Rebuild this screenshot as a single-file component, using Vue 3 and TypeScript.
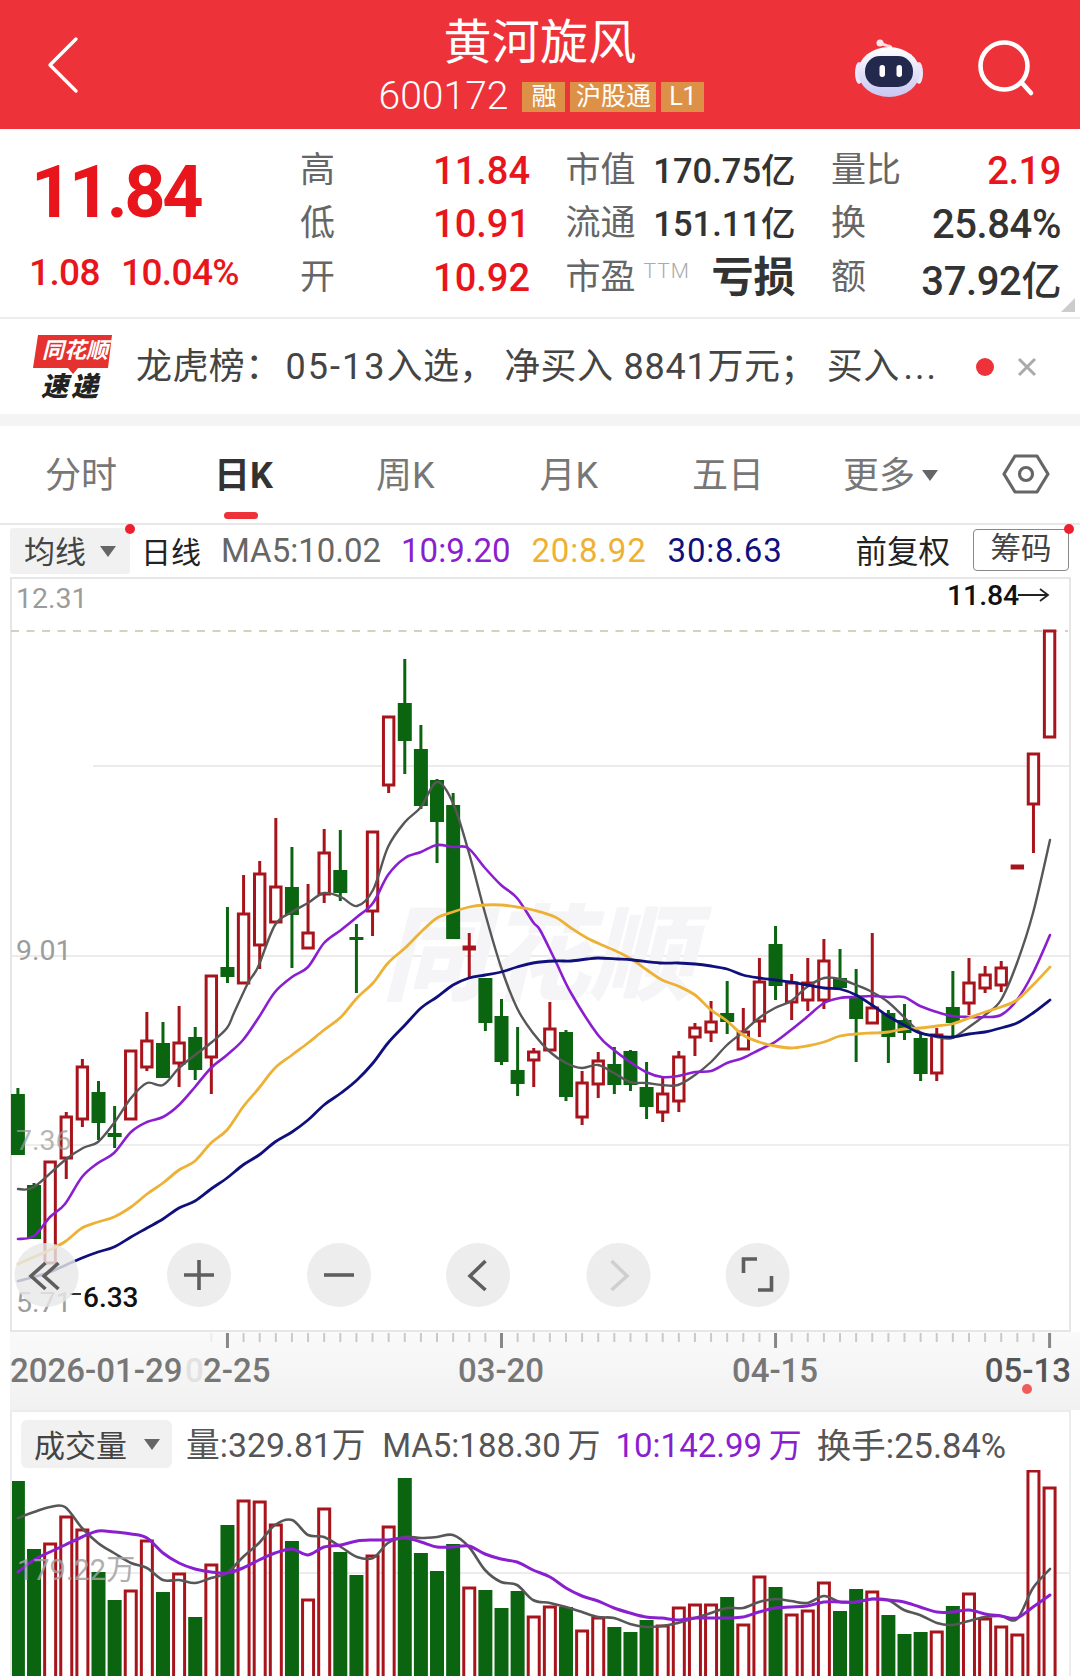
<script setup lang="ts">
type C = [number, number, number, number, number]
// kind: 0 red hollow, 1 green solid; wick top, body top, body bottom, wick bottom
const raw: C[] = [
[1,1088,1094,1155,1155],[1,1183,1185,1239,1239],[0,1162,1162,1263,1263],[0,1112,1117,1158,1179],[0,1059,1067,1119,1127],
[1,1081,1092,1123,1140],[1,1106,1133,1137,1148],[0,1051,1051,1119,1119],[0,1012,1041,1067,1071],[1,1022,1043,1078,1078],
[0,1006,1043,1063,1087],[1,1027,1037,1070,1080],[0,976,976,1057,1094],[1,907,967,977,983],[0,875,914,983,983],
[0,861,874,945,969],[0,818,887,922,922],[1,847,887,915,968],[0,884,933,948,948],[0,829,853,894,903],
[1,830,870,893,901],[1,924,937,940,993],[0,832,832,911,936],[0,717,717,785,793],[1,659,703,741,774],
[1,725,749,806,809],[1,779,780,822,863],[1,793,805,939,939],[0,933,947,949,977],[1,978,978,1023,1031],
[1,999,1016,1062,1065],[1,1027,1070,1084,1096],[0,1048,1052,1060,1087],[0,1002,1029,1050,1050],[1,1030,1032,1097,1101],
[0,1071,1083,1117,1125],[0,1052,1061,1084,1098],[1,1047,1064,1085,1094],[1,1050,1051,1085,1091],[1,1062,1087,1107,1119],
[0,1078,1094,1112,1122],[0,1051,1057,1101,1112],[0,1023,1028,1037,1056],[0,1001,1022,1032,1042],[1,981,1013,1022,1034],
[0,1008,1032,1049,1049],[0,958,982,1021,1037],[1,926,944,986,1000],[0,974,983,1002,1020],[0,958,983,1000,1011],
[0,939,961,1000,1009],[1,949,978,988,988],[1,969,998,1019,1062],[0,933,1008,1023,1023],[1,1010,1013,1037,1063],
[1,1004,1020,1033,1040],[1,1033,1038,1074,1081],[0,1028,1035,1073,1081],[1,971,1007,1023,1039],[0,958,983,1003,1015],
[0,966,975,988,993],[0,961,968,985,992],[0,866,866,868,868],[0,754,754,804,853],[0,631,631,737,737]
]
const xOf = (i: number) => 17.9 + i * 16.12
const candles = raw.map((c, i) => {
  const x = xOf(i)
  const green = c[0] === 1
  const left = green ? Math.max(11, x - 7) : x - 5.2
  const w = green ? x + 7 - left : 10.4
  return { x, green, wt: c[1], bt: c[2], bb: c[3], wb: c[4], left, w, h: Math.max(c[3] - c[2], 2), doji: c[3] - c[2] < 5 }
})
const volTops = [1481,1549,1544,1517,1530,1572,1600,1591,1541,1592,1574,1617,1565,1525,1501,1502,1525,1541,1600,1509,1552,1575,1556,1527,1478,1553,1571,1544,1588,1590,1608,1591,1617,1607,1607,1631,1618,1627,1632,1620,1626,1608,1605,1605,1597,1625,1577,1587,1615,1611,1583,1611,1589,1592,1615,1634,1632,1632,1606,1594,1619,1627,1635,1471,1488]
const vols = volTops.map((t, i) => {
  const c = candles[i]
  return { x: c.x, green: c.green, top: t, left: c.green ? c.left : c.x - 5.5, w: c.green ? c.w : 11 }
})
// Catmull-Rom smoothing of the hand-read moving average points
const smooth = (s: string): string => {
  const p = s.split(' ').map((q) => q.split(',').map(Number))
  let d = `M${p[0][0]} ${p[0][1]}`
  for (let i = 0; i < p.length - 1; i++) {
    const a = p[Math.max(i - 1, 0)]
    const b = p[i]
    const c = p[i + 1]
    const e = p[Math.min(i + 2, p.length - 1)]
    const c1x = (b[0] + (c[0] - a[0]) / 6).toFixed(1)
    const c1y = (b[1] + (c[1] - a[1]) / 6).toFixed(1)
    const c2x = (c[0] - (e[0] - b[0]) / 6).toFixed(1)
    const c2y = (c[1] - (e[1] - b[1]) / 6).toFixed(1)
    d += ` C${c1x} ${c1y} ${c2x} ${c2y} ${c[0]} ${c[1]}`
  }
  return d
}
const ma5 = smooth("18,1189 34,1187 65,1160 83,1148 98,1142 114,1123 131,1098 147,1083 163,1085 179,1068 195,1055 212,1042 227,1028 234,1013 248,983 258,967 275,925 292,912 308,903 324,893 341,897 357,906 373,890 388,847 405,822 421,807 437,782 453,803 469,853 485,913 501,967 517,1008 533,1033 550,1052 566,1063 582,1068 598,1065 614,1073 630,1082 646,1083 662,1085 678,1085 695,1075 711,1062 727,1045 743,1032 759,1018 775,1008 791,1001 807,987 824,978 840,979 856,985 872,992 888,1002 904,1017 920,1032 937,1037 952,1038 969,1027 985,1015 1001,1000 1017,963 1033,913 1050,840")
const ma10 = smooth("18,1239 34,1236 50,1217 65,1204 82,1177 98,1163 114,1153 131,1132 147,1122 163,1117 179,1105 195,1087 211,1068 227,1055 243,1040 259,1017 275,992 292,977 308,967 324,943 341,930 357,917 373,903 388,875 405,858 421,852 437,845 453,847 468,848 485,868 501,885 517,898 533,922 540,930 555,960 571,993 598,1035 614,1050 630,1062 646,1072 662,1077 678,1076 695,1072 711,1071 727,1063 743,1058 759,1050 775,1042 791,1030 807,1017 824,1003 840,998 856,997 872,996 888,997 904,997 920,1006 937,1012 952,1016 969,1017 985,1017 1001,1015 1017,1000 1033,973 1050,935")
const ma20 = smooth("18,1264 34,1257 50,1250 66,1241 82,1228 98,1222 114,1217 131,1207 147,1194 163,1183 179,1170 195,1161 211,1143 227,1130 243,1107 259,1088 275,1068 292,1055 308,1043 324,1030 341,1017 357,998 373,983 388,963 405,948 421,932 437,918 453,912 469,907 485,905 501,905 517,907 533,910 555,917 571,928 587,938 602,945 618,952 633,960 647,970 662,980 678,986 695,995 711,1010 727,1021 743,1035 759,1042 775,1046 791,1048 807,1046 824,1042 840,1036 856,1034 872,1033 888,1032 904,1029 920,1028 937,1026 952,1024 969,1018 985,1012 1001,1007 1017,1000 1033,985 1050,967")
const ma30 = smooth("18,1281 34,1277 50,1272 66,1265 82,1258 98,1252 114,1247 131,1237 147,1228 163,1219 179,1208 195,1201 211,1189 227,1178 243,1165 259,1155 275,1142 292,1132 308,1120 324,1105 341,1093 357,1080 373,1063 388,1043 405,1025 421,1008 437,997 453,985 469,978 485,975 501,972 517,967 533,963 555,961 571,961 587,959 598,958 618,959 633,960 660,963 678,963 695,964 711,966 727,969 743,975 759,978 775,980 791,982 807,985 824,988 840,989 856,995 872,1005 888,1016 904,1025 920,1033 937,1036 952,1037 969,1034 985,1032 1001,1028 1017,1023 1033,1013 1050,1000")
const v5 = smooth("18,1518 34,1512 50,1507 65,1507 82,1528 98,1543 114,1553 131,1563 147,1568 163,1580 179,1580 195,1583 211,1578 227,1573 243,1557 259,1543 275,1525 292,1520 308,1535 324,1537 341,1547 357,1557 373,1558 388,1543 405,1537 421,1538 437,1537 453,1535 469,1547 485,1570 501,1582 517,1585 533,1600 550,1603 566,1607 582,1612 598,1617 614,1618 630,1624 646,1627 662,1626 678,1623 695,1618 711,1613 727,1608 743,1608 759,1602 775,1599 791,1601 807,1603 824,1596 840,1602 856,1602 872,1599 888,1600 904,1610 920,1615 937,1623 952,1625 969,1621 985,1617 1001,1616 1017,1619 1033,1588 1050,1569")
const v10 = smooth("18,1572 34,1560 50,1552 65,1545 82,1537 98,1531 114,1532 131,1534 147,1538 163,1553 179,1563 195,1569 211,1572 227,1573 243,1568 259,1560 275,1553 292,1549 308,1555 324,1547 341,1545 357,1541 373,1540 388,1540 405,1538 421,1542 437,1547 453,1547 469,1546 485,1554 501,1559 517,1562 533,1570 550,1577 566,1588 582,1596 598,1601 614,1608 630,1613 646,1617 662,1618 678,1620 695,1618 711,1618 727,1618 743,1617 759,1612 775,1608 791,1607 807,1606 824,1602 840,1602 856,1602 872,1599 888,1600 904,1602 920,1607 937,1612 952,1612 969,1610 985,1614 1001,1616 1017,1618 1033,1607 1050,1595")
const tabs = ['分时', '日K', '周K', '月K', '五日']
const major = new Set([13, 30, 47, 64])
const ticks = Array.from({ length: 53 }, (_, k) => k + 12).map((i) => ({
  x: xOf(i), major: major.has(i), faint: i === 12
}))
const stats = [
  { a: '高', av: '11.84', b: '市值', bv: '170.75亿', c: '量比', cv: '2.19', red: true },
  { a: '低', av: '10.91', b: '流通', bv: '151.11亿', c: '换', cv: '25.84%', red: false },
  { a: '开', av: '10.92', b: '市盈', bv: '亏损', c: '额', cv: '37.92亿', red: false }
]
const btnX = [46.5, 199, 339, 478, 618.5, 757.6]
</script>

<template>
  <div class="page">
    <header class="hdr">
      <div class="hdr-left">
        <svg class="back" width="40" height="60" viewBox="0 0 40 60"><path d="M31 4 L5 30 L31 56" /></svg>
      </div>
      <div class="hdr-mid">
        <div class="title">黄河旋风</div>
        <div class="code-row">
          <span class="code">600172</span>
          <span class="badge b1">融</span>
          <span class="badge b2">沪股通</span>
          <span class="badge b3">L1</span>
        </div>
      </div>
      <div class="hdr-right">
        <svg class="robot" width="70" height="62" viewBox="0 0 70 62">
          <defs>
            <linearGradient id="rb" x1="0" y1="0" x2="0" y2="1">
              <stop offset="0" stop-color="#ffffff" />
              <stop offset="1" stop-color="#c9c6f2" />
            </linearGradient>
          </defs>
          <path class="ant" d="M27 3 C30 8 35 6 37 8" />
          <circle cx="26" cy="4" r="3.5" fill="#fbe6e8" />
          <ellipse cx="5" cy="34" rx="4" ry="11" fill="#e9e6fb" />
          <ellipse cx="65" cy="34" rx="4" ry="11" fill="#e9e6fb" />
          <ellipse cx="35" cy="33" rx="31" ry="25" fill="url(#rb)" />
          <rect x="11" y="17" width="48" height="31" rx="15" fill="#22294d" />
          <rect x="25.5" y="26" width="5.5" height="12" rx="2.7" fill="#fff" />
          <rect x="42.5" y="26" width="5.5" height="12" rx="2.7" fill="#fff" />
        </svg>
        <svg class="search" width="62" height="62" viewBox="0 0 62 62">
          <circle cx="29" cy="29" r="23.5" />
          <path d="M47 46 L56 56" />
        </svg>
      </div>
    </header>

    <section class="stats">
      <div class="price-box">
        <div class="price">11.84</div>
        <div class="chg"><span>1.08</span><span>10.04%</span></div>
      </div>
      <div class="stat-grid">
        <template v-for="(s, i) in stats" :key="s.a">
          <div class="cell"><span class="lab">{{ s.a }}</span><span class="val red">{{ s.av }}</span></div>
          <div class="cell">
            <span class="lab">{{ s.b }}<sup v-if="i === 2" class="ttm">TTM</sup></span>
            <span class="val2" :class="{ loss: i === 2 }">{{ s.bv }}</span>
          </div>
          <div class="cell"><span class="lab">{{ s.c }}</span><span class="val3" :class="{ red: s.red }">{{ s.cv }}</span></div>
        </template>
      </div>
      <span class="corner"></span>
    </section>

    <section class="news">
      <svg class="logo" width="84" height="68" viewBox="0 0 84 68">
        <path d="M6 1 H80 L76 34 H46 L41 40 L36 34 H1 Z" fill="#e5312f" />
        <text x="10" y="24" class="logo-top">同花顺</text>
        <text x="9" y="62" class="logo-bot">速递</text>
      </svg>
      <div class="news-text">龙虎榜&#xFF1A;<span class="n1">05-13</span>入选&#xFF0C;<span class="n3">净买入</span><span class="n2">8841</span>万元&#xFF1B;<span class="n4">买入</span><span class="n5">...</span></div>
      <span class="dot"></span>
      <svg class="close" width="22" height="22" viewBox="0 0 22 22"><path d="M3 3 L19 19 M19 3 L3 19" /></svg>
    </section>

    <nav class="tabs">
      <span v-for="(t, i) in tabs" :key="t" class="tab" :class="{ on: i === 1 }">{{ t }}</span>
      <span class="tab more">更多<i class="tri"></i></span>
      <svg class="hex" width="48" height="40" viewBox="0 0 48 40">
        <path d="M13 2 H35 L46 20 L35 38 H13 L2 20 Z" />
        <circle cx="24" cy="20" r="6.5" />
      </svg>
    </nav>

    <section class="ind">
      <div class="chip"><span class="chip-t">均线</span><i class="tri small"></i><b class="rdot"></b></div>
      <span class="daily">日线</span>
      <span class="t-gray ma">MA5:10.02</span>
      <span class="t-pur ma">10:9.20</span>
      <span class="t-org ma">20:8.92</span>
      <span class="t-navy ma">30:8.63</span>
      <span class="fq">前复权</span>
      <span class="chou">筹码<b class="rdot"></b></span>
    </section>

    <svg class="chart" width="1080" height="755" viewBox="0 577 1080 755">
      <rect x="11" y="578" width="1059" height="753" fill="#fff" stroke="#e6e6e6" stroke-width="2" />
      <line x1="93" x2="1070" y1="766" y2="766" stroke="#e4e4e4" stroke-width="1.5" />
      <line x1="11" x2="1070" y1="956" y2="956" stroke="#e4e4e4" stroke-width="1.5" />
      <line x1="11" x2="1070" y1="1145" y2="1145" stroke="#e9e9e9" stroke-width="1.5" />
      <text x="382" y="992" class="wm">同花顺</text>
      <line x1="11" x2="1068" y1="631" y2="631" stroke="#c9c1aa" stroke-width="1.5" stroke-dasharray="8 7.5" />
      <text x="16" y="608" class="axl">12.31</text>
      <text x="16" y="960" class="axl">9.01</text>
      <text x="947" y="605" class="now">11.84</text>
      <path d="M1018 595 H1048 M1040 589 L1048 595 L1040 601" fill="none" stroke="#222" stroke-width="1.8" />
      <g v-for="c in candles" :key="c.x">
        <template v-if="c.green">
          <line :x1="c.x" :x2="c.x" :y1="c.wt" :y2="c.wb" stroke="#0b640f" stroke-width="3" />
          <rect :x="c.left" :y="c.bt" :width="c.w" :height="c.h" fill="#0b640f" />
        </template>
        <template v-else>
          <line :x1="c.x" :x2="c.x" :y1="c.wt" :y2="c.wb" stroke="#a8141c" stroke-width="3" />
          <rect :x="c.left" :y="c.bt" :width="c.w" :height="c.h" :fill="c.doji ? '#a8141c' : '#fff'" stroke="#a8141c" stroke-width="3" />
        </template>
      </g>
      <path :d="ma5" class="ln" stroke="#575757" stroke-width="2.4" />
      <path :d="ma10" class="ln" stroke="#8a1fd0" stroke-width="2.6" />
      <path :d="ma20" class="ln" stroke="#edb135" stroke-width="2.8" />
      <path :d="ma30" class="ln" stroke="#10107d" stroke-width="2.8" />
      <text x="16" y="1150" class="axl over">7.36</text>
      <text x="16" y="1312" class="axl">5.71</text>
      <line x1="70" x2="81" y1="1294" y2="1294" stroke="#333" stroke-width="2" />
      <text x="83" y="1307" class="low">6.33</text>

      <g v-for="(x, i) in btnX" :key="x">
        <circle :cx="x" cy="1275" r="32" :fill="i === 0 ? 'rgba(232,232,232,.82)' : '#ededed'" />
      </g>
      <path d="M45.5 1263 L31 1276 L45.5 1289 M58.5 1263 L44 1276 L58.5 1289" class="ic" />
      <path d="M184 1275 H214 M199 1260 V1290" class="ic" />
      <path d="M324 1275 H354" class="ic" />
      <path d="M485.5 1261 L470 1276 L485.5 1290" class="ic" />
      <path d="M611.5 1261 L627 1276 L611.5 1290" class="ic light" />
      <path d="M743.5 1282 V1268 H757 M771.5 1285 V1299 H758" class="ic" transform="translate(0 -9)" />
    </svg>

    <div class="axis">
      <svg width="1080" height="78" viewBox="0 1332 1080 78">
        <g v-for="t in ticks" :key="t.x">
          <line :x1="t.x" :x2="t.x" y1="1333" :y2="t.major ? 1348 : 1342" :stroke="t.major ? '#888' : (t.faint ? '#ececec' : '#c9c9c9')" :stroke-width="t.major ? 3 : 2" />
        </g>
        <text x="10" y="1382" class="dt">2026-01-29</text>
        <text x="185" y="1382" class="dt fade-d">0</text>
        <text x="203" y="1382" class="dt">2-25</text>
        <text x="501" y="1382" class="dt mid">03-20</text>
        <text x="775" y="1382" class="dt mid">04-15</text>
        <text x="1071" y="1382" class="dt end">05-13</text>
        <circle cx="1027" cy="1389" r="5" fill="#ef5c5c" />
      </svg>
    </div>

    <section class="vol">
      <div class="vol-head">
        <div class="chip vchip"><span>成交量</span><i class="tri small"></i></div>
        <span class="vt vt1">量:329.81万</span>
        <span class="vt vt2">MA5:188.30&#8201;万</span>
        <span class="vt vt3">10:142.99&#8201;万</span>
        <span class="vt vt4">换手:25.84%</span>
      </div>
      <svg class="volchart" width="1080" height="206" viewBox="0 1470 1080 206">
        <line x1="11" x2="1070" y1="1573" y2="1573" stroke="#e6e6e6" stroke-width="1.5" />
        <g v-for="v in vols" :key="v.x">
          <rect v-if="v.green" :x="v.left" :y="v.top" :width="v.w" :height="1676 - v.top" fill="#0b640f" />
          <rect v-else :x="v.left" :y="v.top" :width="v.w" :height="1686 - v.top" fill="#fff" stroke="#a8141c" stroke-width="3" />
        </g>
        <path :d="v5" class="ln" stroke="#575757" stroke-width="2.6" />
        <path :d="v10" class="ln" stroke="#8a1fd0" stroke-width="3" />
        <text x="17" y="1580" class="axl over2">179.22万</text>
      </svg>
    </section>
  </div>
</template>

<style>
html, body { margin: 0; background: #fff; }
</style>

<style scoped>
.page {
  position: relative;
  width: 1080px;
  height: 1676px;
  overflow: hidden;
  background: #fff;
  font-family: Roboto, "Noto Sans CJK SC", sans-serif;
  color: #333;
}
/* header */
.hdr {
  height: 129px;
  background: #ee3239;
  display: grid;
  grid-template-columns: 220px 1fr 220px;
  align-items: center;
}
.hdr-left { padding-left: 45px; display: flex; }
.back path { fill: none; stroke: #fff; stroke-width: 3.4; stroke-linecap: round; stroke-linejoin: round; }
.hdr-mid { display: flex; flex-direction: column; align-items: center; padding-top: 8px; height: 121px; }
.title { font-size: 48px; line-height: 70px; color: #fff; height: 72px; letter-spacing: 0.2px; }
.code-row { display: flex; align-items: center; height: 30px; margin-top: 2px; color: #fff; padding-left: 3px; }
.code { font-size: 39px; line-height: 30px; margin-right: 14px; margin-top: -3px; font-weight: 300; }
.badge { background: #dd9147; color: #fff; font-size: 25px; height: 30px; line-height: 29px; text-align: center; display: block; }
.b1 { width: 43px; }
.b2 { width: 86px; margin-left: 5px; }
.b3 { width: 43px; margin-left: 5px; }
.hdr-right { display: flex; align-items: center; padding-top: 2px; margin-left: -6px; }
.robot { margin-top: 8px; }
.ant { fill: none; stroke: #fbdfe2; stroke-width: 2.5; stroke-linecap: round; }
.search { margin-left: 51px; margin-top: 4px; }
.search circle, .search path { fill: none; stroke: #fff; stroke-width: 4.6; stroke-linecap: round; }
/* stats */
.stats {
  position: relative;
  height: 188px;
  border-bottom: 2px solid #ececec;
  display: flex;
}
.price-box { width: 301px; padding-left: 31px; box-sizing: border-box; }
.price { font-size: 72px; line-height: 72px; font-weight: 700; color: #e8161c; margin-top: 28px; letter-spacing: -3.4px; white-space: nowrap; }
.chg { display: flex; gap: 21px; color: #e8161c; font-size: 37px; line-height: 40px; margin-top: 24px; font-weight: 500; letter-spacing: -0.6px; margin-left: -2px; white-space: nowrap; }
.stat-grid {
  display: grid;
  grid-template-columns: 229px 229px 229px;
  column-gap: 36.5px;
  grid-auto-rows: 53.5px;
  margin-top: 15px;
}
.cell { display: flex; justify-content: space-between; align-items: center; white-space: nowrap; }
.lab { font-size: 35px; color: #666; position: relative; line-height: 50px; margin-left: -1px; }
.ttm { font-size: 21px; color: #aaa; font-weight: 300; vertical-align: baseline; position: relative; top: -11px; margin-left: 8px; line-height: 0; letter-spacing: 1px; }
.val { font-size: 38px; font-weight: 500; }
.val2 { font-size: 34.5px; font-weight: 500; color: #333; margin-bottom: 6px; }
.val2.loss { font-size: 42px; font-weight: 600; margin-bottom: 9px; }
.val3 { font-size: 40px; font-weight: 500; color: #333; letter-spacing: -0.4px; }
.val3.red { font-size: 38px; color: #e8161c; }
.red { color: #e8161c; }
.corner { position: absolute; right: 5px; bottom: 5px; width: 0; height: 0; border-left: 14px solid transparent; border-bottom: 14px solid #ccc; }
/* news */
.news { height: 95px; display: flex; align-items: center; position: relative; }
.logo { margin-left: 32px; margin-top: 3px; flex: none; }
.logo-top { font-size: 22px; font-weight: 700; font-style: italic; fill: #fff; }
.logo-bot { font-size: 27px; font-weight: 900; font-style: italic; fill: #222; letter-spacing: 3px; }
.news-text { margin-left: 20px; width: 800px; font-size: 36px; line-height: 50px; color: #444; white-space: nowrap; flex: none; letter-spacing: 0.4px; }
.n1 { letter-spacing: 2px; margin-left: 4px; }
.n2 { letter-spacing: 0.8px; margin-left: 10px; }
.n3 { margin-left: 8.5px; }
.n4 { margin-left: 10px; }
.n5 { letter-spacing: 2px; margin-left: 4px; }
.dot { width: 18px; height: 18px; border-radius: 50%; background: #ee3239; flex: none; margin-left: 40px; }
.close { margin-left: 22px; flex: none; }
.close path { fill: none; stroke: #aaa; stroke-width: 3; }
/* tabs */
.tabs {
  border-top: 12px solid #f4f4f4;
  height: 97px;
  border-bottom: 2px solid #e8e8e8;
  display: flex;
  align-items: center;
  padding-left: 45px;
  position: relative;
}
.tab { font-size: 36px; color: #777; white-space: nowrap; margin-left: 100px; line-height: 50px; margin-top: 2px; position: relative; display: flex; align-items: center; }
.tab:first-child { margin-left: 0; }
.tab:nth-child(2) { margin-left: 97px; }
.tab:nth-child(3) { margin-left: 103px; }
.tab:nth-child(4) { margin-left: 105px; }
.tab:nth-child(5) { margin-left: 94px; }
.tab.more { margin-left: 79px; }
.tab.on { color: #333; font-weight: 700; }
.tab.on::after { content: ""; position: absolute; left: 10px; right: 15px; bottom: -18px; height: 7px; border-radius: 4px; background: #ee3239; }
.tri { display: block; width: 0; height: 0; border-left: 8px solid transparent; border-right: 8px solid transparent; border-top: 11px solid #666; }
.more .tri { margin-left: 7px; }
.hex { margin-left: 64px; margin-top: -2px; }
.hex path, .hex circle { fill: none; stroke: #666; stroke-width: 3.2; stroke-linejoin: round; }
/* indicator row */
.ind { height: 52px; display: flex; align-items: center; padding-left: 10px; position: relative; white-space: nowrap; }
.chip { position: relative; width: 120px; height: 46px; background: #f1f1f1; border-radius: 3px; display: flex; align-items: center; padding-left: 14px; box-sizing: border-box; font-size: 31px; color: #444; flex: none; }
.chip-t { margin-bottom: 4px; }
.chip .small { margin-left: 14px; }
.rdot { position: absolute; top: -4px; right: -5px; width: 10px; height: 10px; border-radius: 50%; background: #ee2030; display: block; }
.daily { font-size: 30px; color: #222; margin-left: 11px; margin-bottom: 3px; }
.ma { font-size: 33px; margin-bottom: 1px; }
.t-gray { color: #666; margin-left: 20px; }
.t-pur { color: #8a1fd0; margin-left: 20px; }
.t-org { color: #edb135; margin-left: 21px; letter-spacing: 0.8px; }
.t-navy { color: #10107d; margin-left: 21px; letter-spacing: 0.8px; }
.fq { font-size: 31.5px; color: #222; margin-left: 73px; margin-bottom: 5px; }
.chou { position: relative; box-sizing: border-box; width: 96px; height: 42px; border: 1.5px solid #888; border-radius: 4px; font-size: 30.5px; line-height: 38px; text-align: center; color: #444; margin-left: 23px; margin-bottom: 3px; }
.chou .rdot { right: -6px; top: -6px; }
/* chart */
.chart { display: block; }
.ln { fill: none; stroke-linejoin: round; stroke-linecap: round; }
.wm { font-size: 104px; font-weight: 900; font-style: italic; fill: #f5f5f7; }
.axl { font-size: 28.5px; fill: #9c9c9c; }
.over { opacity: .72; }
.over2 { font-size: 29px; fill: #a2a2a2; opacity: .85; }
.now { font-size: 28.5px; font-weight: 500; fill: #111; letter-spacing: -0.1px; }
.low { font-size: 28px; font-weight: 500; fill: #111; }
.ic { fill: none; stroke: #5e5e5e; stroke-width: 3.6; }
.ic.light { stroke: #cfcfcf; }
/* axis */
.axis {
  height: 78px;
  background: linear-gradient(to right, #fff 10px, transparent 10px), linear-gradient(180deg, #fafafa, #f1f1f1);
}
.axis svg { display: block; }
.dt { font-size: 33px; font-weight: 500; fill: #777; }
.dt.mid { text-anchor: middle; }
.dt.end { text-anchor: end; fill: #555; }
.fade-d { fill: #e2e2e2; }
/* volume */
.vol { position: relative; height: 266px; overflow: hidden; background: #fff; }
.vol::before { content: ""; position: absolute; left: 10px; right: 9px; top: 0; bottom: -4px; border: 2px solid #ececec; border-bottom: 0; pointer-events: none; }
.vol-head { height: 60px; padding-left: 21px; padding-top: 10px; box-sizing: border-box; display: flex; align-items: flex-start; white-space: nowrap; }
.vchip { width: 151px; height: 48px; padding-left: 13px; border-radius: 6px; }
.vchip span { margin-bottom: 2px; }
.vchip .small { margin-left: 17px; }
.vt { font-size: 33px; line-height: 48px; color: #555; margin-top: 2px; }
.vt1 { margin-left: 14px; font-size: 33.8px; }
.vt2 { margin-left: 16.5px; }
.vt3 { margin-left: 15px; color: #8a1fd0; }
.vt4 { margin-left: 15px; font-size: 34.5px; }
.volchart { display: block; }
</style>
